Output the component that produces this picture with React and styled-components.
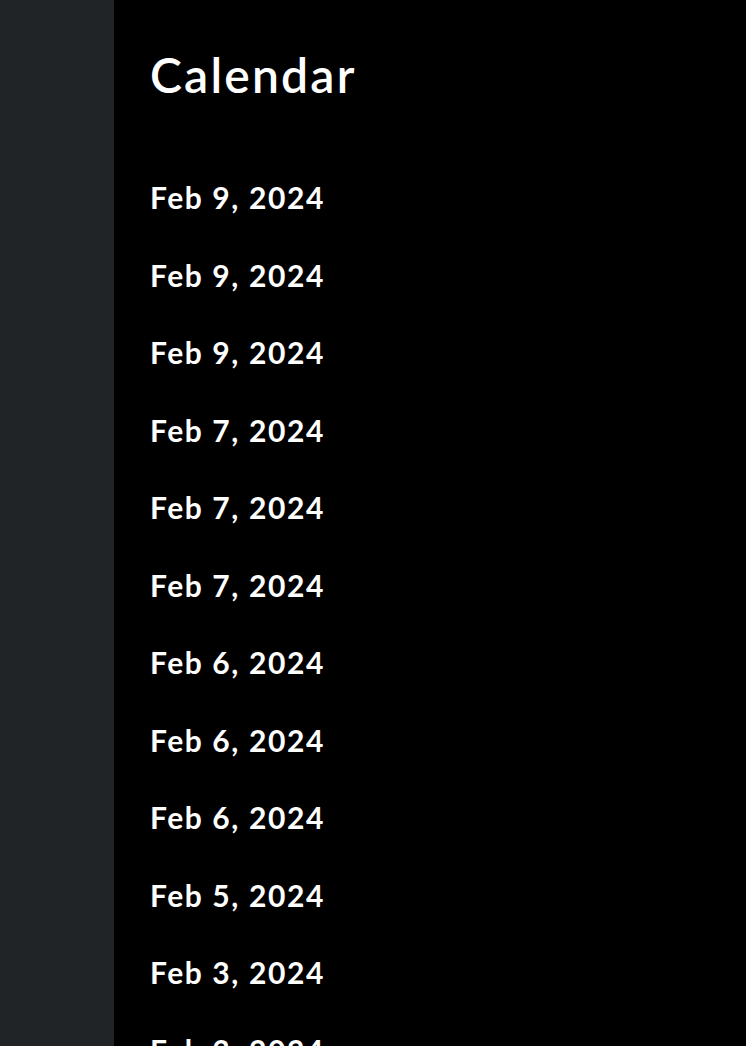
import styled, { createGlobalStyle } from "styled-components";

const GlobalStyle = createGlobalStyle`
  html, body {
    margin: 0;
    padding: 0;
    background: #000;
    overflow: hidden;
  }
  body {
    font-family: Lato, "Open Sans", sans-serif;
  }
`;

const dates = [
  "Feb 9, 2024",
  "Feb 9, 2024",
  "Feb 9, 2024",
  "Feb 7, 2024",
  "Feb 7, 2024",
  "Feb 7, 2024",
  "Feb 6, 2024",
  "Feb 6, 2024",
  "Feb 6, 2024",
  "Feb 5, 2024",
  "Feb 3, 2024",
  "Feb 3, 2024",
  "Feb 2, 2024",
];

const App = () => {
  return (
    <>
      <GlobalStyle />
      <Layout>
        <Sidebar />
        <Main>
          <Title>Calendar</Title>
          <DateList>
            {dates.map((d, i) => (
              <DateItem key={i}>{d}</DateItem>
            ))}
          </DateList>
        </Main>
      </Layout>
    </>
  );
};

export default App;

const Layout = styled.div`
  display: flex;
  height: 1046px;
  overflow: hidden;
`;

const Sidebar = styled.aside`
  width: 114px;
  flex-shrink: 0;
  background: #202427;
`;

const Main = styled.main`
  flex: 1;
  background: #000;
  padding: 47px 0 0 36px;
  color: #fff;
`;

const Title = styled.h1`
  margin: 0;
  font-size: 48px;
  line-height: 56px;
  font-weight: 600;
  letter-spacing: 2.2px;
`;

const DateList = styled.ul`
  list-style: none;
  margin: 56px 0 0;
  padding: 0;
`;

const DateItem = styled.li`
  font-size: 30px;
  line-height: 77.5px;
  font-weight: 700;
  letter-spacing: 1.6px;
`;
